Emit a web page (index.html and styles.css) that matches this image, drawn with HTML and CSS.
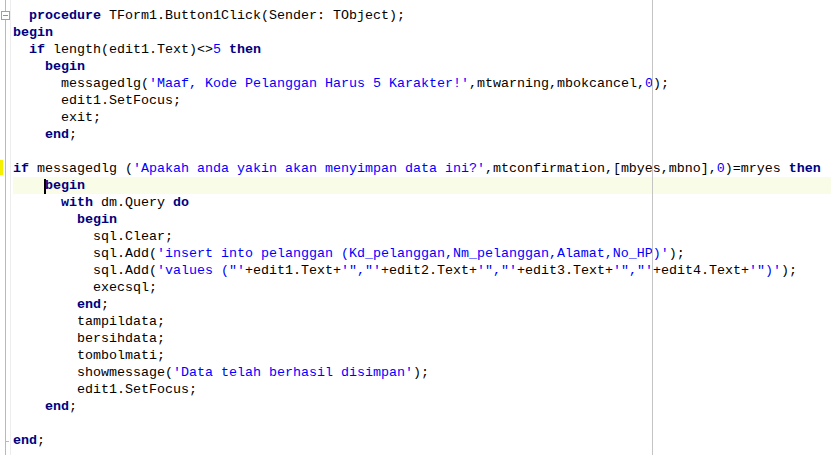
FILE: index.html
```html
<!DOCTYPE html>
<html>
<head>
<meta charset="utf-8">
<link rel="stylesheet" href="styles.css">
</head>
<body>
<div class="editor">
  <div class="margin"></div>
  <div class="line"><div class="g"><span class="fold"><span class="minus"></span></span></div><div class="c">  <b>procedure</b> TForm1.Button1Click(Sender: TObject);</div></div>
  <div class="line"><div class="g"></div><div class="c"><b>begin</b></div></div>
  <div class="line"><div class="g"></div><div class="c">  <b>if</b> length(edit1.Text)&lt;&gt;<i>5</i> <b>then</b></div></div>
  <div class="line"><div class="g"></div><div class="c">    <b>begin</b></div></div>
  <div class="line"><div class="g"></div><div class="c">      messagedlg(<i>'Maaf, Kode Pelanggan Harus 5 Karakter!'</i>,mtwarning,mbokcancel,<i>0</i>);</div></div>
  <div class="line"><div class="g"></div><div class="c">      edit1.SetFocus;</div></div>
  <div class="line"><div class="g"></div><div class="c">      exit;</div></div>
  <div class="line"><div class="g"></div><div class="c">    <b>end</b>;</div></div>
  <div class="line"><div class="g"></div><div class="c"></div></div>
  <div class="line"><div class="g"><span class="mod"></span></div><div class="c"><b>if</b> messagedlg (<i>'Apakah anda yakin akan menyimpan data ini?'</i>,mtconfirmation,[mbyes,mbno],<i>0</i>)=mryes <b>then</b></div></div>
  <div class="line cur"><div class="g"></div><div class="c">    <b><span class="caret">b</span>egin</b></div></div>
  <div class="line"><div class="g"></div><div class="c">      <b>with</b> dm.Query <b>do</b></div></div>
  <div class="line"><div class="g"></div><div class="c">        <b>begin</b></div></div>
  <div class="line"><div class="g"></div><div class="c">          sql.Clear;</div></div>
  <div class="line"><div class="g"></div><div class="c">          sql.Add(<i>'insert into pelanggan (Kd_pelanggan,Nm_pelanggan,Alamat,No_HP)'</i>);</div></div>
  <div class="line"><div class="g"></div><div class="c">          sql.Add(<i>'values ("'</i>+edit1.Text+<i>'","'</i>+edit2.Text+<i>'","'</i>+edit3.Text+<i>'","'</i>+edit4.Text+<i>'")'</i>);</div></div>
  <div class="line"><div class="g"></div><div class="c">          execsql;</div></div>
  <div class="line"><div class="g"></div><div class="c">        <b>end</b>;</div></div>
  <div class="line"><div class="g"></div><div class="c">        tampildata;</div></div>
  <div class="line"><div class="g"></div><div class="c">        bersihdata;</div></div>
  <div class="line"><div class="g"></div><div class="c">        tombolmati;</div></div>
  <div class="line"><div class="g"></div><div class="c">        showmessage(<i>'Data telah berhasil disimpan'</i>);</div></div>
  <div class="line"><div class="g"></div><div class="c">        edit1.SetFocus;</div></div>
  <div class="line"><div class="g"></div><div class="c">    <b>end</b>;</div></div>
  <div class="line"><div class="g"></div><div class="c"></div></div>
  <div class="line"><div class="g"><span class="tick"></span></div><div class="c"><b>end</b>;</div></div>
</div>
</body>
</html>
```
FILE: styles.css
```css
html, body {
  margin: 0;
  padding: 0;
  background: #ffffff;
  overflow: hidden;
}

.editor {
  position: relative;
  width: 831px;
  height: 455px;
  box-sizing: border-box;
  padding-top: 7px;
  overflow: hidden;
  font-family: "Liberation Mono", "Courier New", monospace;
  font-size: 13.333px;
  line-height: 17px;
  color: #000000;
  background: linear-gradient(to right,
    transparent 5px, #b4b4dc 5px, #b4b4dc 6px, transparent 6px,
    transparent 10px, #ededed 10px, #ededed 11px, transparent 11px);
}

.margin {
  position: absolute;
  left: 652px;
  top: 0;
  bottom: 0;
  width: 1px;
  background: #c4c4c4;
  z-index: 2;
}

.line {
  display: grid;
  grid-template-columns: 13px 1fr;
  height: 17px;
}

.g {
  display: flex;
  align-items: center;
}

.c {
  white-space: pre;
}

.c b {
  font-weight: bold;
  color: #000080;
}

.c i {
  font-style: normal;
  color: #0000ff;
}

.cur .c {
  background: #f9fce6;
}

.caret {
  position: relative;
}

.caret::before {
  content: "";
  position: absolute;
  left: -1px;
  top: 1px;
  width: 2px;
  height: 15px;
  background: #000000;
}

.fold {
  display: flex;
  align-items: center;
  justify-content: center;
  width: 9px;
  height: 9px;
  box-sizing: border-box;
  margin-left: 1px;
  margin-top: -1px;
  border: 1px solid #9c9cc8;
  background: #ffffff;
}

.minus {
  width: 5px;
  height: 1px;
  background: #8c8cc0;
}

.mod {
  align-self: flex-start;
  width: 3px;
  height: 15px;
  background: #f4f000;
}

.tick {
  width: 4px;
  height: 1px;
  margin-left: 5px;
  margin-top: 2px;
  background: #b4b4dc;
}
```
